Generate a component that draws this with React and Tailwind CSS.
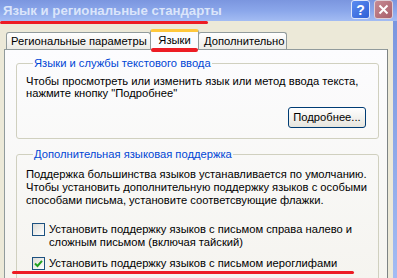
import React from "react";

function Checkbox({ checked }) {
  return (
    <div className="w-[13px] h-[13px] shrink-0 border border-[#1c5180] bg-gradient-to-br from-[#dcdcd7] to-white flex items-center justify-center">
      {checked && (
        <svg width="9" height="9" viewBox="0 0 9 9">
          <path d="M1 4.5 L3.5 7 L8 1.8" stroke="#21a121" strokeWidth="2" fill="none" />
        </svg>
      )}
    </div>
  );
}

export default function App() {
  return (
    <div
      className="relative w-[397px] h-[278px] overflow-hidden bg-[#ece9d8] text-[11.2px] text-black whitespace-nowrap flex flex-col"
      style={{ fontFamily: '"Liberation Sans", Arial, sans-serif' }}
    >
      {/* Title bar */}
      <div className="h-[21px] shrink-0 flex items-center bg-gradient-to-b from-[#7b96df] via-[#8aa6ea] to-[#a3bcf3] pl-[3px] pr-[4px]">
        <span className="text-[13.2px] font-bold text-[#dbe5fa]">
          Язык и региональные стандарты
        </span>
        <div className="ml-auto flex gap-[4px] items-start h-full">
          <div className="w-[19px] h-[19px] rounded-[3px] border border-[#dfe7fb] bg-gradient-to-br from-[#5c8cf0] to-[#2f5fd6] flex items-center justify-center text-white font-bold text-[14px] leading-none">
            ?
          </div>
          <div className="w-[19px] h-[19px] rounded-[3px] border border-[#dfcfd6] bg-gradient-to-br from-[#c68a93] to-[#a85f6b] flex items-center justify-center">
            <svg width="11" height="11" viewBox="0 0 11 11">
              <path d="M1.5 1.5 L9.5 9.5 M9.5 1.5 L1.5 9.5" stroke="white" strokeWidth="2" />
            </svg>
          </div>
        </div>
      </div>

      {/* Body */}
      <div className="flex-1 flex min-h-0">
        <div className="flex-1 flex flex-col pl-[4px] pt-[8px] min-w-0">
          {/* Tabs */}
          <div className="h-[20px] shrink-0 flex items-end pl-[2px]">
            <div className="h-[17px] w-[145px] shrink-0 border border-b-0 border-[#919b9c] rounded-t-[3px] bg-gradient-to-b from-white to-[#ecebe6] flex items-center pl-[4px]">
              Региональные параметры
            </div>
            <div className="h-[20px] w-[49px] shrink-0 -ml-[1px] border-t-[3px] border-t-[#ffc83c] border-x border-x-[#919b9c] rounded-t-[3px] bg-[#fcfcfe] flex items-center justify-center relative z-10">
              Языки
            </div>
            <div className="h-[17px] w-[89px] shrink-0 -ml-[1px] border border-b-0 border-[#919b9c] rounded-t-[3px] bg-gradient-to-b from-white to-[#ecebe6] flex items-center pl-[5px]">
              Дополнительно
            </div>
          </div>

          {/* Panel */}
          <div className="flex-1 w-[384px] border border-[#919b9c] border-r-[#7d8384] bg-gradient-to-b from-[#fcfcfe] to-[#f5f4ef] pl-[11px] pr-[8px] pt-[6px]">
            <fieldset className="min-w-0 w-[363px] border border-[#d0d0bf] rounded-[3px] pl-[9px] pr-[12px] pb-[10px]">
              <legend className="text-[#0046d5] leading-[14px] px-[1px] ml-[7px]">Языки и службы текстового ввода</legend>
              <p className="leading-[12px] pt-[5px]">
                Чтобы просмотреть или изменить язык или метод ввода текста,
                <br />
                нажмите кнопку "Подробнее"
              </p>
              <div className="flex justify-end mt-[8px]">
                <button className="w-[78px] h-[21px] rounded-[3px] border border-[#003c74] bg-gradient-to-b from-white to-[#e6e5de]">
                  Подробнее...
                </button>
              </div>
            </fieldset>

            <fieldset className="min-w-0 w-[363px] mt-[8px] border border-[#d0d0bf] rounded-[3px] pl-[9px] pr-[12px] pb-[10px]">
              <legend className="text-[#0046d5] leading-[14px] px-[1px] ml-[7px]">Дополнительная языковая поддержка</legend>
              <p className="leading-[13px] pt-[7px]">
                Поддержка большинства языков устанавливается по умолчанию.
                <br />
                Чтобы установить дополнительную поддержку языков с особыми
                <br />
                способами письма, установите соответсвующие флажки.
              </p>
              <div className="flex gap-[4px] mt-[16px] ml-[6px]">
                <Checkbox />
                <div className="leading-[13px]">
                  Установить поддержку языков с письмом справа налево и
                  <br />
                  сложным письмом (включая тайский)
                </div>
              </div>
              <div className="flex gap-[4px] mt-[8px] ml-[6px]">
                <Checkbox checked />
                <div className="leading-[13px]">Установить поддержку языков с письмом иероглифами</div>
              </div>
            </fieldset>
          </div>
        </div>
        <div className="w-[4px] bg-gradient-to-b from-[#7b96df] to-[#a3bcf3] shrink-0" />
      </div>

      {/* red annotation marks */}
      <div className="absolute left-0 top-[21px] w-[208px] h-[3px] bg-[#ed1c24] rounded-full" />
      <div className="absolute left-[151px] top-[48px] w-[47px] h-[4px] bg-[#ed1c24] rounded-full z-20" />
      <div className="absolute left-[12px] top-[271px] w-[342px] h-[3px] bg-[#ed1c24] rounded-full" />
    </div>
  );
}
